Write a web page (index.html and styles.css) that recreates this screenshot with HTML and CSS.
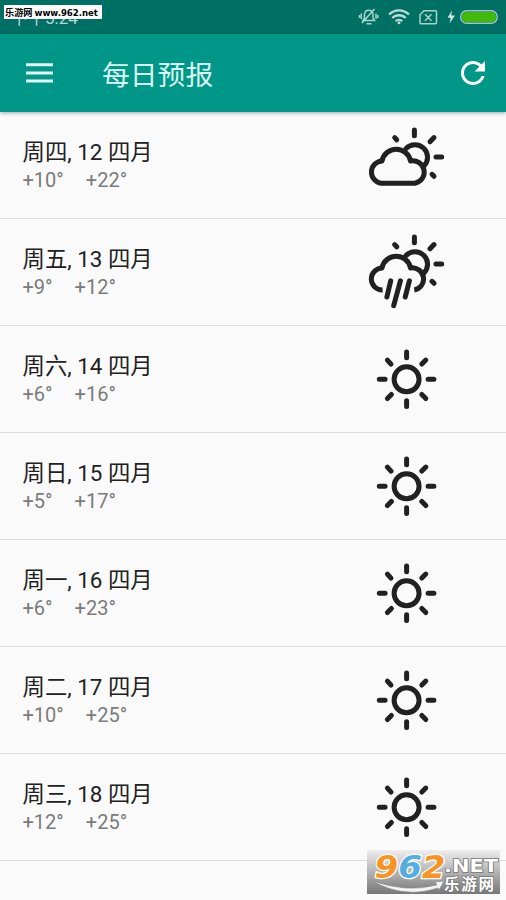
FILE: index.html
```html
<!DOCTYPE html>
<html lang="zh-CN">
<head>
  <meta charset="UTF-8"/>
  <meta name="viewport" content="width=device-width,initial-scale=1"/>
  <title>每日预报</title>
  <link rel="stylesheet" href="styles.css">
</head>
<body>
  <!-- shared weather icons -->
  <svg class="defs" width="0" height="0">
    <symbol id="sun" viewBox="0 0 88 88">
      <circle cx="44.6" cy="44.3" r="12.5"/>
      <path d="M44.6 17v5.8M44.6 65.8v5.8M17.3 44.3h5.8M66.1 44.3h5.8M25.4 25.1l3.6 4M63.8 25.1l-4 4M25.4 63.5l4-4M63.8 63.5l-4-4"/>
    </symbol>
    <symbol id="half-sun" viewBox="0 0 88 88">
      <path d="M44 27.5a12.4 12.4 0 0 1 18 17.5"/>
      <path d="M52.4 9v5.7M72 16.6l-4 4.1M74 36h5.7M32.7 16.6l2 2.2M70 53.3l2 2"/>
    </symbol>
    <symbol id="partly" viewBox="0 0 88 88">
      <use href="#half-sun"/>
      <path d="M20 40a14.5 14.5 0 0 1 28.5 0A11.3 11.2 0 0 1 53 62.3H19.3A11.2 11.2 0 0 1 20 40z"/>
    </symbol>
    <symbol id="rain" viewBox="0 0 88 88">
      <use href="#half-sun"/>
      <path class="butt" d="M20.6 62A11 11 0 0 1 20 40a14.5 14.5 0 0 1 28.5 0A11.1 11.1 0 0 1 52.3 62"/>
      <path d="M28.7 52.9L24.9 69M38.4 52.9L31.7 77.7M47.4 52.9L43.2 69"/>
    </symbol>
  </svg>

  <div class="statusbar">
    <span class="clock">下午5:24</span>
    <span class="site-tag"><b>乐游网</b>www.962.net</span>
    <svg class="status-icons" width="146" height="34" viewBox="0 0 146 34">
      <!-- muted bell -->
      <g fill="none" stroke="#a9d3cd" stroke-width="1.5">
        <path d="M3 20.5h11.500l-1.500-2.500v-4a4.300 4.300 0 0 0-8.500 0v4zM6.500 23.700h5M1.300 13.500v5.500M-.5 15v3M16 13.500v5.500M17.800 15v3M14.500 9L2 23"/>
      </g>
      <!-- wifi -->
      <g fill="none" stroke="#b9ddd8" stroke-width="2.300">
        <path d="M29 14.500a14 14 0 0 1 20 0M32.300 18a9.500 9.500 0 0 1 13.400 0M35.700 21.200a4.700 4.700 0 0 1 6.600 0"/>
      </g>
      <circle cx="39" cy="22.800" r="1.500" fill="#b9ddd8"/>
      <!-- no sim -->
      <path d="M64 10.700h11.500q1 0 1 1v11q0 1-1 1H61q-1 0-1-1V14.700zM65 14.300l6.500 6.500M71.500 14.300L65 20.800" fill="none" stroke="#a9d3cd" stroke-width="1.500"/>
      <!-- battery -->
      <path d="M92 10.500L87.500 17.800h3.200L89.500 23.500l5.500-8h-3.700z" fill="#d2e9e5"/>
      <rect x="100.700" y="10.700" width="36.500" height="12.600" rx="6" fill="none" stroke="#9acbc3" stroke-width="1.400"/>
      <rect x="102" y="12" width="34" height="10" rx="4.500" fill="#43b90c"/>
    </svg>
  </div>

  <header class="appbar">
    <svg class="menu" width="27" height="20" viewBox="0 0 27 20"><path d="M0 1.800h27M0 10h27M0 18h27"/></svg>
    <h1>每日预报</h1>
    <svg class="refresh" width="24" height="24" viewBox="4 4 16 16">
      <path d="M17.650 6.350C16.200 4.900 14.210 4 12 4c-4.420 0-7.990 3.580-7.990 8s3.570 8 7.990 8c3.730 0 6.840-2.550 7.730-6h-2.080c-.82 2.330-3.040 4-5.650 4-3.310 0-6-2.690-6-6s2.690-6 6-6c1.660 0 3.140.69 4.220 1.780L13 11h7V4l-2.350 2.350z"/>
    </svg>
  </header>

  <ul class="forecast">
    <li>
      <div class="day"><h2>周四, 12 四月</h2><p><span>+10°</span><span>+22°</span></p></div>
      <svg class="icon"><use href="#partly"/></svg>
    </li>
    <li>
      <div class="day"><h2>周五, 13 四月</h2><p><span>+9°</span><span>+12°</span></p></div>
      <svg class="icon"><use href="#rain"/></svg>
    </li>
    <li>
      <div class="day"><h2>周六, 14 四月</h2><p><span>+6°</span><span>+16°</span></p></div>
      <svg class="icon"><use href="#sun"/></svg>
    </li>
    <li>
      <div class="day"><h2>周日, 15 四月</h2><p><span>+5°</span><span>+17°</span></p></div>
      <svg class="icon"><use href="#sun"/></svg>
    </li>
    <li>
      <div class="day"><h2>周一, 16 四月</h2><p><span>+6°</span><span>+23°</span></p></div>
      <svg class="icon"><use href="#sun"/></svg>
    </li>
    <li>
      <div class="day"><h2>周二, 17 四月</h2><p><span>+10°</span><span>+25°</span></p></div>
      <svg class="icon"><use href="#sun"/></svg>
    </li>
    <li>
      <div class="day"><h2>周三, 18 四月</h2><p><span>+12°</span><span>+25°</span></p></div>
      <svg class="icon"><use href="#sun"/></svg>
    </li>
  </ul>

  <div class="watermark">
    <svg width="133" height="44" viewBox="0 0 133 44">
      <path d="M6 31Q40 43 70 35L68 32L77 31L72 40L71 38Q36 49 6 31z" fill="#f4f4f4" stroke="#888" stroke-width=".6"/>
      <text class="num" x="7.500" y="27.500" textLength="71" lengthAdjust="spacingAndGlyphs"><tspan fill="#f79425">9</tspan><tspan fill="#56ade0">6</tspan><tspan fill="#f79425">2</tspan></text>
      <text class="net" x="77" y="22" textLength="54" lengthAdjust="spacingAndGlyphs">.NET</text>
      <text class="cn" x="77" y="39.500" textLength="50">乐游网</text>
    </svg>
  </div>
</body>
</html>
```
FILE: styles.css
```css
* { box-sizing:border-box; }
body {
  margin:0; height:900px; overflow:hidden; position:relative;
  font-family:Roboto, "Noto Sans CJK SC", sans-serif;
  background:#fafafa; color:#212121;
}
.defs { position:absolute; }
.statusbar {
  position:relative;
  display:flex; justify-content:space-between;
  height:34px; background:#006f64; overflow:hidden;
}
.clock { padding:7px 0 0 11px; font-size:17px; line-height:22px; color:#b2d8d3; }
.site-tag {
  position:absolute; left:4px; top:5px;
  width:98px; height:14px; padding-left:1px;
  background:#fff; color:#000; white-space:nowrap;
  font:bold 9.5px/14px "DejaVu Sans Condensed", "Open Sans", sans-serif;
}
.site-tag b { margin-right:2px; font:bold 9.2px/14px "Noto Sans CJK SC", sans-serif; }
.status-icons { overflow:visible; }
.appbar {
  position:relative;
  display:flex; align-items:center;
  height:78px; padding:0 21px 0 26px;
  background:#009688;
  box-shadow:0 1px 4px rgba(0,0,0,.35);
}
.menu { stroke:#e4f8f5; stroke-width:3; }
.appbar h1 { margin:6px 0 0 49px; font-size:27.8px; font-weight:400; line-height:36px; color:#d9f7f2; }
.refresh { margin-left:auto; fill:#fff; }
.forecast { list-style:none; margin:0; padding:0; }
.forecast li {
  display:flex; justify-content:space-between;
  height:106.94px; padding:9px 56px 0 22.5px;
  border-bottom:1px solid #dcdcdc;
}
.day { padding-top:16.4px; }
.day h2 { margin:0; font-size:22.4px; font-weight:400; line-height:30px; white-space:nowrap; }
.day p { display:flex; gap:22px; margin:0; font-size:20px; line-height:26px; color:#7b7b7b; }
.icon {
  width:88px; height:88px;
  fill:none; stroke:#212121; stroke-width:5;
  stroke-linecap:round; stroke-linejoin:round;
}
.butt { stroke-linecap:butt; }
.watermark {
  position:absolute; left:367px; top:850px;
  width:133px; height:44px;
  background:linear-gradient(#eee, #b4b4b4 50%, #777);
}
.watermark svg { display:block; }
.num { font:italic bold 32px "DejaVu Sans", sans-serif; stroke:#fff; stroke-width:2.5px; paint-order:stroke; }
.net { font:bold 18px "DejaVu Sans", sans-serif; fill:#fff; stroke:#777; stroke-width:1.5px; paint-order:stroke; }
.cn { font:bold 15.5px "Noto Sans CJK SC", sans-serif; fill:#fff; stroke:#777; stroke-width:1.5px; paint-order:stroke; }
```
